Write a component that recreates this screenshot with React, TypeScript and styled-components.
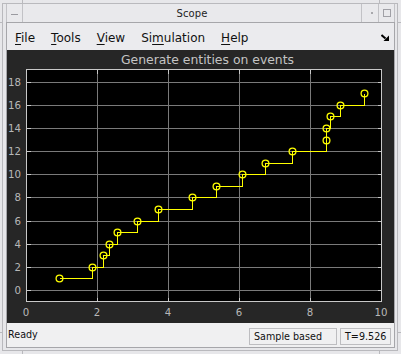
import React from "react";
import styled, { createGlobalStyle } from "styled-components";

const Global = createGlobalStyle`
  html, body { margin: 0; padding: 0; background: #e7e7ea; }
  body { font-family: "DejaVu Sans", "Liberation Sans", sans-serif; }
`;

const Page = styled.div`
  position: relative;
  width: 401px;
  height: 354px;
  box-sizing: border-box;
  padding: 3px 3px 3px 2px;
  background: #e7e7ea;
  font-family: "DejaVu Sans", "Liberation Sans", sans-serif;
`;

const Outer = styled.div`
  box-sizing: border-box;
  height: 100%;
  border: 1px solid #b9b9bd;
  padding: 0 2px 2px 3px;
  display: flex;
  flex-direction: column;
`;

const TitleBar = styled.div`
  height: 18px;
  display: flex;
  align-items: stretch;
  background: #e9e9ec;
`;

const TitleButton = styled.div<{ $w: number }>`
  width: ${(p) => p.$w}px;
  box-sizing: border-box;
  border-left: 1px solid #c2c2c6;
  border-right: 1px solid #c2c2c6;
  display: flex;
  align-items: center;
  justify-content: center;
  & + & { border-left: none; }
`;

const TitleText = styled.div`
  flex: 1;
  display: flex;
  align-items: center;
  justify-content: center;
  font-size: 10px;
  color: #1e1e1e;
  letter-spacing: 0.1px;
`;

const MinGlyph = styled.div`
  width: 7px;
  height: 1px;
  background: #9a9aa0;
  margin-top: 2px;
`;

const DotGlyph = styled.div`
  width: 2px;
  height: 2px;
  background: #a8a8ac;
  margin-left: 3px;
`;

const BoxGlyph = styled.div`
  width: 8px;
  height: 8px;
  box-sizing: border-box;
  border: 1px solid #a0a0a6;
`;

const Inner = styled.div`
  flex: 1;
  border: 1px solid #a6a6aa;
  display: flex;
  flex-direction: column;
  background: #ebebee;
`;

const MenuBar = styled.div`
  height: 27px;
  display: flex;
  align-items: center;
  padding-top: 2px;
  box-sizing: border-box;
  font-size: 12px;
  color: #111;
`;

const MenuItem = styled.div`
  padding: 0 8px;
  & u { text-decoration: underline; text-underline-offset: 2px; }
`;

const DockIcon = styled.div`
  margin-left: auto;
  margin-right: 5px;
  margin-top: 0px;
  display: flex;
`;

const PlotPanel = styled.div`
  height: 273px;
  background: #262626;
  display: flex;
  flex-direction: column;
`;

const PlotTitle = styled.div`
  height: 19px;
  display: flex;
  align-items: center;
  justify-content: center;
  font-size: 12.4px;
  color: #c4c4c4;
  padding-left: 14px;
`;

const StatusBar = styled.div`
  height: 24px;
  display: flex;
  align-items: center;
  background: #f0f0f1;
  font-size: 9.6px;
  color: #111;
`;

const StatusText = styled.div`
  flex: 1;
  padding-left: 1px;
  margin-top: -2px;
`;

const StatusBox = styled.div<{ $w: number }>`
  width: ${(p) => p.$w}px;
  height: 17px;
  margin-top: 2px;
  box-sizing: border-box;
  border: 1px solid #bdbdc0;
  display: flex;
  align-items: center;
  padding-left: 4px;
  margin-right: 3px;
`;

const Handle = styled.div<{ $x: number; $y: number; $w: number; $h: number }>`
  position: absolute;
  left: ${(p) => p.$x}px;
  top: ${(p) => p.$y}px;
  width: ${(p) => p.$w}px;
  height: ${(p) => p.$h}px;
  background: #b9b9bd;
`;

const X0 = 19;
const XU = 35.5;
const Y0 = 221;
const YU = 11.57;
const sx = (x: number) => X0 + XU * x;
const sy = (y: number) => Y0 - YU * y;
const px = (v: number) => Math.round(v) + 0.5;

const DATA_X = [0.94, 1.87, 2.18, 2.35, 2.56, 3.13, 3.72, 4.69, 5.34, 6.09, 6.74, 7.5, 8.46, 8.46, 8.56, 8.85, 9.53];

const Chart: React.FC = () => {
  const left = px(sx(0));
  const right = px(sx(10));
  const top = 0.5;
  const bottom = 232.5;
  const yTicks = Array.from({ length: 10 }, (_, i) => i * 2);
  const xTicks = [0, 2, 4, 6, 8, 10];
  let path = "";
  DATA_X.forEach((x, i) => {
    const X = px(sx(x));
    const Y = sy(i + 1);
    if (i === 0) path += `M${X} ${px(Y)}`;
    else path += ` H${X} V${px(Y)}`;
  });
  return (
    <svg width={387} height={254} style={{ display: "block" }}>
      <rect x={left} y={top} width={right - left} height={bottom - top} fill="#000" />
      {xTicks.slice(1, -1).map((t) => (
        <line key={"gx" + t} x1={px(sx(t))} x2={px(sx(t))} y1={top} y2={bottom} stroke="#7a7a7a" shapeRendering="crispEdges" />
      ))}
      {yTicks.map((t) => (
        <line key={"gy" + t} x1={left} x2={right} y1={px(sy(t))} y2={px(sy(t))} stroke="#7a7a7a" shapeRendering="crispEdges" />
      ))}
      {yTicks.map((t) => (
        <g key={"ty" + t}>
          <line x1={left} x2={left + 4} y1={px(sy(t))} y2={px(sy(t))} stroke="#c8c8c8" shapeRendering="crispEdges" />
          <line x1={right - 4} x2={right} y1={px(sy(t))} y2={px(sy(t))} stroke="#c8c8c8" shapeRendering="crispEdges" />
        </g>
      ))}
      {xTicks.map((t) => (
        <g key={"tx" + t}>
          <line x1={px(sx(t))} x2={px(sx(t))} y1={top} y2={top + 4} stroke="#c8c8c8" shapeRendering="crispEdges" />
          <line x1={px(sx(t))} x2={px(sx(t))} y1={bottom - 4} y2={bottom} stroke="#c8c8c8" shapeRendering="crispEdges" />
        </g>
      ))}
      <rect x={left} y={top} width={right - left} height={bottom - top} fill="none" stroke="#c8c8c8" shapeRendering="crispEdges" />
      <path d={path} fill="none" stroke="#ffff00" strokeWidth={1} shapeRendering="crispEdges" />
      {DATA_X.map((x, i) => (
        <circle key={"m" + i} cx={px(sx(x))} cy={px(sy(i + 1))} r={3.4} fill="none" stroke="#ffff00" strokeWidth={1.3} />
      ))}
      {yTicks.map((t) => (
        <text key={"ly" + t} x={14} y={sy(t) + 4} textAnchor="end" fontSize={10.2} fill="#b8b8b8" fontFamily="DejaVu Sans, sans-serif">
          {t}
        </text>
      ))}
      {xTicks.map((t) => (
        <text key={"lx" + t} x={sx(t)} y={247} textAnchor="middle" fontSize={10.2} fill="#b8b8b8" fontFamily="DejaVu Sans, sans-serif">
          {t}
        </text>
      ))}
    </svg>
  );
};

export default function App() {
  return (
    <>
      <Global />
      <Page>
        <Outer>
          <TitleBar>
            <TitleButton $w={17}>
              <MinGlyph />
            </TitleButton>
            <TitleText>Scope</TitleText>
            <TitleButton $w={18}>
              <DotGlyph />
            </TitleButton>
            <TitleButton $w={16}>
              <BoxGlyph />
            </TitleButton>
          </TitleBar>
          <Inner>
            <MenuBar>
              <MenuItem><u>F</u>ile</MenuItem>
              <MenuItem><u>T</u>ools</MenuItem>
              <MenuItem><u>V</u>iew</MenuItem>
              <MenuItem>Si<u>m</u>ulation</MenuItem>
              <MenuItem><u>H</u>elp</MenuItem>
              <DockIcon>
                <svg width="8" height="7" viewBox="0 0 8 7">
                  <path d="M0.5 1 L4.5 4.5" stroke="#000" strokeWidth="2" fill="none" />
                  <polygon points="8,1.5 8,7 2.5,7" fill="#000" />
                </svg>
              </DockIcon>
            </MenuBar>
            <PlotPanel>
              <PlotTitle>Generate entities on events</PlotTitle>
              <Chart />
            </PlotPanel>
            <StatusBar>
              <StatusText>Ready</StatusText>
              <StatusBox $w={88}>Sample based</StatusBox>
              <StatusBox $w={51}>T=9.526</StatusBox>
            </StatusBar>
          </Inner>
        </Outer>
        <Handle $x={22} $y={0} $w={1} $h={3} />
        <Handle $x={379} $y={0} $w={1} $h={3} />
        <Handle $x={22} $y={351} $w={1} $h={3} />
        <Handle $x={379} $y={351} $w={1} $h={3} />
        <Handle $x={0} $y={22} $w={2} $h={1} />
        <Handle $x={398} $y={22} $w={3} $h={1} />
        <Handle $x={0} $y={332} $w={2} $h={1} />
        <Handle $x={398} $y={332} $w={3} $h={1} />
      </Page>
    </>
  );
}
